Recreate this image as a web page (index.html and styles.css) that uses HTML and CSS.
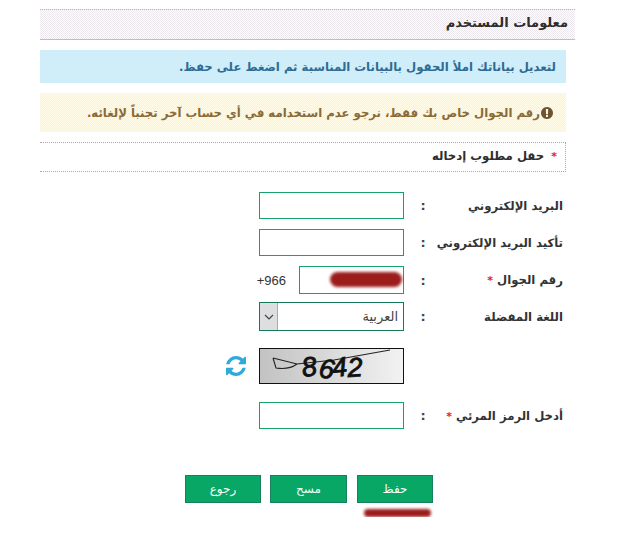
FILE: index.html
```html
<!DOCTYPE html>
<html lang="ar" dir="rtl">
<head>
    <meta charset="UTF-8">
    <meta name="viewport" content="width=device-width, initial-scale=1.0">
    <title>معلومات المستخدم</title>
    <link rel="stylesheet" href="styles.css">
</head>
<body>

    <div class="user-info-page">
        <h2 class="user-info-header">معلومات المستخدم</h2>

        <div class="user-info-alert user-info-alert-blue">لتعديل بياناتك املأ الحقول بالبيانات المناسبة ثم اضغط على حفظ.</div>

        <div class="user-info-alert user-info-alert-yellow">
            <svg class="user-info-alert-icon" viewBox="0 0 1536 1792"><path fill="currentColor" d="M768 128q209 0 385.500 103t279.500 279.500 103 385.500-103 385.500-279.500 279.500-385.500 103-385.500-103-279.500-279.500-103-385.500 103-385.500 279.500-279.500 385.500-103zm128 1247v-190q0-14-9-23.500t-22-9.500h-192q-13 0-23 10t-10 23v189q0 13 10 23t23 10h192q13 0 22-9.500t9-22.500zm-2-344l18-621q0-12-10-18-10-8-24-8h-220q-14 0-24 8-10 6-10 18l17 621q0 10 10 17.500t24 7.500h185q14 0 23.500-7.500t11.500-17.500z"/></svg>
            <span>رقم الجوال خاص بك فقط، نرجو عدم استخدامه في أي حساب آخر تجنباً لإلغائه.</span>
        </div>

        <div class="user-info-required"><span class="user-info-star">*</span> حقل مطلوب إدخاله</div>

        <!-- Form rows -->
        <form class="user-info-form">
            <div class="user-info-row">
                <label class="user-info-label">البريد الإلكتروني</label>
                <span class="user-info-colon">:</span>
                <input type="text" class="user-info-input">
            </div>
            <div class="user-info-row">
                <label class="user-info-label">تأكيد البريد الإلكتروني</label>
                <span class="user-info-colon">:</span>
                <input type="text" class="user-info-input">
            </div>
            <div class="user-info-row user-info-row-phone">
                <label class="user-info-label">رقم الجوال <span class="user-info-star">*</span></label>
                <span class="user-info-colon">:</span>
                <div class="user-info-phone">
                    <div class="user-info-phone-box">
                        <input type="text" class="user-info-input">
                        <span class="user-info-scribble user-info-scribble-phone"></span>
                    </div>
                    <span class="user-info-code" dir="ltr">+966</span>
                </div>
            </div>
            <div class="user-info-row user-info-row-lang">
                <label class="user-info-label">اللغة المفضلة</label>
                <span class="user-info-colon">:</span>
                <div class="user-info-select-box">
                    <select class="user-info-select">
                        <option>العربية</option>
                    </select>
                    <span class="user-info-select-arrow">
                        <svg width="10" height="6" viewBox="0 0 10 6"><path d="M1 1 L5 5 L9 1" fill="none" stroke="#444" stroke-width="1.200"/></svg>
                    </span>
                </div>
            </div>
            <div class="user-info-row user-info-row-captcha">
                <span></span>
                <span></span>
                <div class="user-info-captcha">
                    <svg class="user-info-captcha-img" viewBox="0 0 145 36">
                        <defs>
                            <linearGradient id="captchaBg" x1="0" x2="1" y1="0" y2="0">
                                <stop offset="0" stop-color="#c2c2c2"/>
                                <stop offset="1" stop-color="#f2f2f2"/>
                            </linearGradient>
                        </defs>
                        <rect x="0.500" y="0.500" width="144" height="35" fill="url(#captchaBg)" stroke="#111"/>
                        <path d="M14 10 L38 16 L75 12 L131 2 M14 10 L17 20 Q30 22 38 16" fill="none" stroke="#222" stroke-width="1.100"/>
                        <text x="44" y="29" rotate="-8 8 -6 -3" class="user-info-captcha-text">8642</text>
                    </svg>
                    <svg class="user-info-refresh" viewBox="0 0 1536 1792"><path fill="currentColor" d="M1511 1056q0 5-1 7-64 268-268 434.500t-478 166.500q-146 0-282.500-55t-243.500-157l-129 129q-19 19-45 19t-45-19-19-45v-448q0-26 19-45t45-19h448q26 0 45 19t19 45-19 45l-137 137q71 66 161 102t187 36q134 0 250-65t186-179q11-17 53-117 8-23 30-23h192q13 0 22.500 9.500t9.500 22.500zm25-800v448q0 26-19 45t-45 19h-448q-26 0-45-19t-19-45 19-45l138-138q-148-137-349-137-134 0-250 65t-186 179q-11 17-53 117-8 23-30 23h-199q-13 0-22.500-9.500t-9.500-22.500v-7q65-268 270-434.500t480-166.500q146 0 284 55.500t245 156.500l130-129q19-19 45-19t45 19 19 45z"/></svg>
                </div>
            </div>
            <div class="user-info-row">
                <label class="user-info-label">أدخل الرمز المرئي <span class="user-info-star">*</span></label>
                <span class="user-info-colon">:</span>
                <input type="text" class="user-info-input">
            </div>

            <div class="user-info-buttons">
                <div class="user-info-save">
                    <button type="button" class="user-info-btn">حفظ</button>
                    <div class="user-info-scribble-save"></div>
                </div>
                <button type="button" class="user-info-btn user-info-btn-wide">مسح</button>
                <button type="button" class="user-info-btn">رجوع</button>
            </div>
        </form>
    </div>

</body>
</html>
```

FILE: styles.css
```css
body {
    margin: 0;
    background-color: #fff;
    font-family: 'DejaVu Sans', sans-serif;
    color: #333;
}

.user-info-page {
    width: 535px;
    margin-right: 46px;
    padding-top: 9px;
}

/* Header */
.user-info-header {
    margin: 0 0 10px;
    height: 29px;
    line-height: 26px;
    padding-right: 7px;
    font-size: 13px;
    font-weight: bold;
    color: #2d2d2d;
    background-color: #f6f3f6;
    background-image: repeating-conic-gradient(#fff 0 25%, #ebe6eb 0 50%);
    background-size: 2px 2px;
    border-top: 1px dotted #bbb;
    border-bottom: 1px solid #c4bcc4;
}

/* Alerts */
.user-info-alert {
    display: flex;
    align-items: center;
    gap: 1px;
    margin-right: 9px;
    padding-right: 10px;
    font-size: 11.7px;
    font-weight: bold;
}

.user-info-alert-blue {
    height: 33px;
    margin-bottom: 10px;
    background-color: #d0edfa;
    color: #2e6c94;
}

.user-info-alert-yellow {
    height: 39px;
    margin-bottom: 10px;
    padding-right: 13px;
    background-color: #fdf7dc;
    background-image: repeating-conic-gradient(#fffbe6 0 25%, #fcf3d2 0 50%);
    background-size: 2px 2px;
    color: #8a6a36;
}

.user-info-alert-icon {
    width: 12px;
    height: 14px;
    color: #6e5330;
}

.user-info-required {
    height: 28px;
    line-height: 27px;
    margin-right: 9px;
    padding-right: 8px;
    font-size: 11.7px;
    font-weight: bold;
    color: #2d2d2d;
    border: 1px dotted #c49ac4;
    border-left: none;
}

.user-info-required .user-info-star {
    margin-left: 3px;
}

.user-info-star {
    color: #e8202a;
    font-weight: bold;
    font-size: 11px;
}

/* Form */
.user-info-form {
    padding-top: 20px;
    padding-right: 12px;
}

.user-info-row {
    display: grid;
    grid-template-columns: 130px 29px 145px;
    align-items: center;
    margin-bottom: 10px;
}

.user-info-row-phone {
    margin-bottom: 8px;
}

.user-info-row-lang {
    margin-bottom: 17px;
}

.user-info-row-captcha {
    margin-bottom: 18px;
}

.user-info-label {
    font-size: 11.7px;
    font-weight: bold;
    color: #333;
    white-space: nowrap;
}

.user-info-colon {
    font-size: 13px;
    font-weight: bold;
    color: #444;
    padding-left: 9px;
    text-align: center;
}

.user-info-input {
    box-sizing: border-box;
    display: block;
    width: 145px;
    height: 27px;
    margin: 0;
    padding: 0;
    background-color: #fff;
    border: 1px solid #16a06a;
}

.user-info-phone {
    display: flex;
    align-items: center;
    gap: 13px;
}

.user-info-phone-box {
    position: relative;
}

.user-info-phone-box .user-info-input {
    width: 105px;
    height: 28px;
}

.user-info-code {
    font-family: 'Liberation Sans', sans-serif;
    font-size: 13px;
    color: #333;
}

/* Language select with the old-style grey arrow box */
.user-info-select-box {
    position: relative;
    width: 145px;
    height: 29px;
}

.user-info-select {
    box-sizing: border-box;
    display: block;
    width: 100%;
    height: 100%;
    margin: 0;
    padding: 0 5px 0 0;
    font-family: 'DejaVu Sans', sans-serif;
    font-size: 13px;
    color: #444;
    background-color: #fff;
    border: 1px solid #16795a;
    border-radius: 0;
    appearance: none;
}

.user-info-select-arrow {
    position: absolute;
    top: 1px;
    left: 1px;
    display: flex;
    align-items: center;
    justify-content: center;
    width: 17px;
    height: 27px;
    background-color: #dcdee0;
    border-right: 1px solid #a9a9a9;
}

/* Captcha */
.user-info-captcha {
    display: flex;
    align-items: center;
    gap: 13px;
    height: 36px;
}

.user-info-captcha-img {
    flex: none;
    width: 145px;
    height: 36px;
    overflow: visible;
}

.user-info-captcha-text {
    direction: ltr;
    font-family: 'Liberation Sans', sans-serif;
    font-size: 27px;
    font-style: italic;
    fill: #111;
    stroke: #111;
    stroke-width: 0.9;
}

.user-info-refresh {
    flex: none;
    width: 20px;
    height: 24px;
    color: #2ea9dc;
}

/* Red scribbles */
.user-info-scribble {
    position: absolute;
    background-color: #9c1c1c;
    border-radius: 8px;
    filter: blur(1.5px);
}

.user-info-scribble-phone {
    top: 6px;
    right: 2px;
    width: 72px;
    height: 15px;
}

.user-info-scribble-save {
    width: 67px;
    height: 8px;
    margin: 6px 2px 0 0;
    background-color: #9c1c1c;
    border-radius: 8px;
    filter: blur(1.5px);
}

/* Buttons */
.user-info-buttons {
    display: flex;
    align-items: flex-start;
    gap: 10px;
    margin-top: 46px;
    padding-right: 130px;
}

.user-info-btn {
    display: block;
    box-sizing: border-box;
    width: 76px;
    height: 28px;
    padding: 0;
    font-family: 'DejaVu Sans', sans-serif;
    font-size: 12px;
    color: #f2fff8;
    background-color: #08a766;
    border: 1px solid #17805f;
    cursor: pointer;
}

.user-info-btn-wide {
    width: 77px;
    margin-left: -1px;
}
```
